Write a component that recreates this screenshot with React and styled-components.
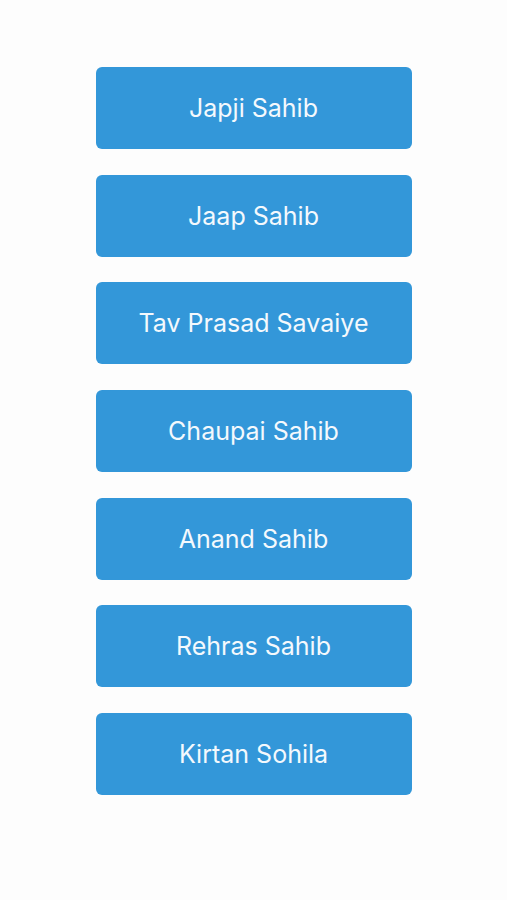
import React from 'react';
import styled, { createGlobalStyle } from 'styled-components';

const GlobalStyle = createGlobalStyle`
  html, body {
    margin: 0;
    padding: 0;
    background: #fdfdfd;
  }
`;

const Screen = styled.div`
  width: 507px;
  height: 900px;
  background: #fdfdfd;
  display: flex;
  flex-direction: column;
  align-items: center;
  padding-top: 67px;
  box-sizing: border-box;
  gap: 25.7px;
  font-family: Inter, "Noto Sans", sans-serif;
`;

const BaniButton = styled.button`
  width: 316px;
  height: 82px;
  border: none;
  border-radius: 6px;
  background: #3397d9;
  color: #f4f9fd;
  font-family: inherit;
  font-size: 25px;
  font-weight: 400;
  letter-spacing: 0;
  display: flex;
  align-items: center;
  justify-content: center;
  cursor: pointer;
  flex-shrink: 0;
`;

const banis = [
  'Japji Sahib',
  'Jaap Sahib',
  'Tav Prasad Savaiye',
  'Chaupai Sahib',
  'Anand Sahib',
  'Rehras Sahib',
  'Kirtan Sohila',
];

function App() {
  return (
    <>
      <GlobalStyle />
      <Screen>
        {banis.map((name) => (
          <BaniButton key={name}>{name}</BaniButton>
        ))}
      </Screen>
    </>
  );
}

export default App;
